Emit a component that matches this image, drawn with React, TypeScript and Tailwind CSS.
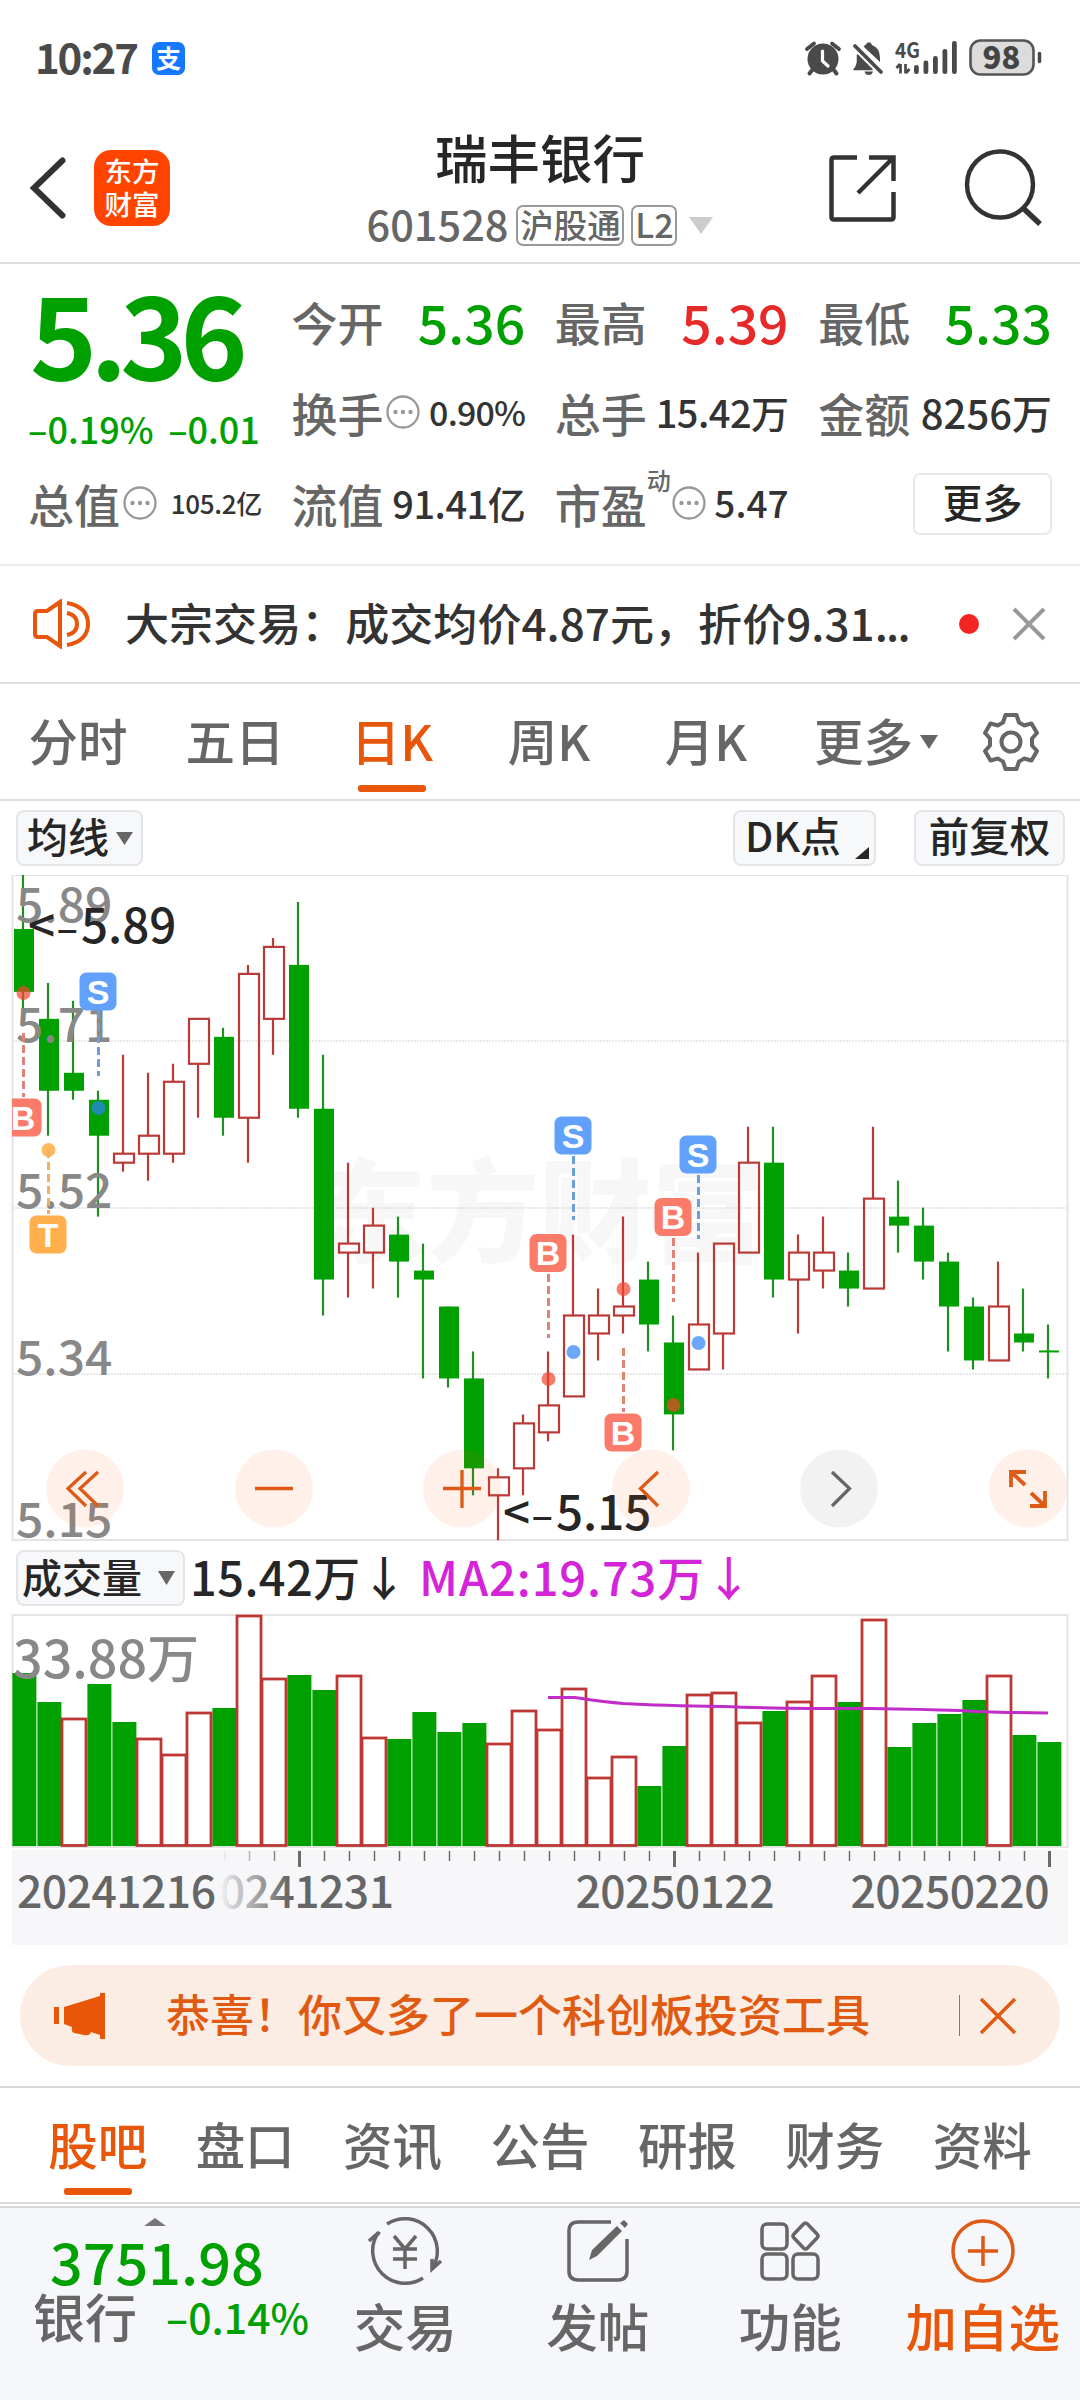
import React from "react";

const GREEN = "#00a000";
const RED = "#b93a36";
const ORANGE = "#e8560a";

/* [up, high, low, bodyTop, bodyBottom] in cents */
const candles: [number, number, number, number, number][] = [
  [0, 589, 574, 583, 576],
  [0, 577, 560, 573, 565],
  [0, 575, 564, 567, 565],
  [0, 565, 551, 564, 560],
  [1, 569, 556, 558, 557],
  [1, 567, 555, 560, 558],
  [1, 568, 557, 566, 558],
  [1, 573, 562, 573, 568],
  [0, 572, 560, 571, 562],
  [1, 579, 557, 578, 562],
  [1, 582, 569, 581, 573],
  [0, 586, 562, 579, 563],
  [0, 569, 540, 563, 544],
  [1, 557, 542, 548, 547],
  [1, 552, 543, 550, 547],
  [0, 551, 542, 549, 546],
  [0, 548, 533, 545, 544],
  [0, 541, 532, 541, 533],
  [0, 536, 520, 533, 523],
  [1, 523, 515, 522, 520],
  [1, 529, 520, 528, 523],
  [1, 536, 526, 530, 527],
  [1, 549, 531, 540, 531],
  [1, 543, 535, 540, 538],
  [1, 551, 538, 541, 540],
  [0, 546, 536, 544, 539],
  [0, 540, 525, 537, 529],
  [1, 547, 534, 539, 534],
  [1, 548, 534, 548, 538],
  [1, 561, 547, 557, 547],
  [0, 561, 542, 557, 544],
  [1, 549, 538, 547, 544],
  [1, 551, 543, 547, 545],
  [0, 547, 541, 545, 543],
  [1, 561, 543, 553, 543],
  [0, 555, 547, 551, 550],
  [0, 552, 544, 550, 546],
  [0, 547, 536, 546, 541],
  [0, 542, 534, 541, 535],
  [1, 546, 535, 541, 535],
  [0, 543, 536, 538, 537],
  [0, 539, 533, 536, 536],
];

/* bar tops, in chart pixels below the panel's upper edge */
const volumes = [
  58, 87, 104, 69, 107, 124, 140, 98, 93, 1, 64, 60, 75, 61, 123, 124, 97, 117, 108, 129, 96, 115, 74, 163, 142, 171,
  131, 80, 78, 108, 96, 87, 61, 87, 5, 132, 108, 99, 85, 61, 120, 127,
];

const py = (c: number) => (589 - c) * 8.99;

type Mark = { t: "B" | "S" | "T"; x: number; y: number; from: number; to: number; dot: number };
const marks: Mark[] = [
  { t: "B", x: 23, y: 242.5, from: 158, to: 222, dot: 118 },
  { t: "T", x: 48, y: 359.5, from: 275, to: 339, dot: 275 },
  { t: "S", x: 98, y: 116.5, from: 136, to: 201, dot: 233 },
  { t: "B", x: 548, y: 378, from: 399, to: 463, dot: 504 },
  { t: "S", x: 573, y: 260.5, from: 281, to: 345, dot: 477 },
  { t: "B", x: 623, y: 557.5, from: 473, to: 537, dot: 414 },
  { t: "B", x: 673, y: 342, from: 363, to: 427, dot: 530 },
  { t: "S", x: 698, y: 279.5, from: 300, to: 364, dot: 468 },
];
const markFill = { B: "#fb7b6b", S: "#62a1fb", T: "#ffb04d" };
const markLine = { B: "#dd8377", S: "#6a9fdc", T: "#edb15f" };
const markDot = { B: "#f2452c", S: "#2b82fa", T: "#ff9d1c" };

const CJK = "'Noto Sans CJK SC', sans-serif";

function PriceChart() {
  return (
    <svg width="1080" height="668" viewBox="0 0 1080 668" className="block" fontFamily={CJK} fontWeight="500">
      <clipPath id="panel">
        <rect x="12" y="0" width="1056" height="668" />
      </clipPath>
      <text x="314" y="379" fontSize="112" fontWeight="900" fill="#f7f7f7" textLength="450">东方财富</text>
      {[166, 333, 499].map((y) => (
        <line key={y} x1="12" x2="1067" y1={y} y2={y} stroke="#d2d2d2" strokeWidth="1.2" strokeDasharray="2 1" />
      ))}
      <rect x="12.5" y="0" width="1055" height="665" fill="none" stroke="#e4e4e4" strokeWidth="2" />
      {candles.map(([up, hi, lo, a, b], i) => {
        const cx = 23 + 25 * i;
        return up ? (
          <g key={i} stroke={RED} strokeWidth="2.2" fill="none">
            <path d={`M${cx} ${py(hi)}V${py(a)}M${cx} ${py(b)}V${py(lo)}`} />
            <rect x={cx - 9} y={py(a)} width="20" height={py(b) - py(a)} />
          </g>
        ) : (
          <g key={i}>
            <rect x={cx - 1.1} y={py(hi)} width="2.2" height={py(lo) - py(hi)} fill="#1f8f22" />
            <rect x={cx - 9} y={py(a) - (a === b ? 1 : 0)} width="20" height={Math.max(2, py(b) - py(a))} fill={GREEN} />
          </g>
        );
      })}
      <g clipPath="url(#panel)">
        {marks.map((m, i) => (
          <circle key={i} cx={m.x + 0.5} cy={m.dot} r="7" fill={markDot[m.t]} fillOpacity="0.7" />
        ))}
      </g>
      <g fontSize="48" fill="#888">
        <text x="16" y="47">5.89</text>
        <text x="16" y="167">5.71</text>
        <text x="16" y="333">5.52</text>
        <text x="16" y="500">5.34</text>
        <text x="16" y="662">5.15</text>
      </g>
      <g clipPath="url(#panel)">
        {marks.map((m, i) => (
          <g key={i}>
            <line x1={m.x + 0.5} x2={m.x + 0.5} y1={m.from} y2={m.to} stroke={markLine[m.t]} strokeWidth="3" strokeDasharray="8 4" />
            <rect x={m.x - 18.5} y={m.y - 19} width="37" height="38" rx="7" fill={markFill[m.t]} />
            <text
              x={m.x}
              y={m.y + 12}
              textAnchor="middle"
              fontSize="34"
              fontWeight="700"
              fontFamily="'Liberation Sans', sans-serif"
              fill="#fff"
            >
              {m.t}
            </text>
          </g>
        ))}
      </g>
      <g fontSize="47.500" fill="#262626">
        <text y="67.500">
          <tspan x="28">&lt;</tspan>
          <tspan x="56.500" fontSize="40">–</tspan>
          <tspan x="81">5.89</tspan>
        </text>
        <text y="654.500">
          <tspan x="503">&lt;</tspan>
          <tspan x="531.500" fontSize="40">–</tspan>
          <tspan x="556">5.15</tspan>
        </text>
      </g>
      {[85, 274, 462, 651, 1028].map((x) => (
        <circle key={x} cx={x} cy="613.500" r="39" fill="#ff5a00" fillOpacity="0.085" />
      ))}
      <circle cx="839" cy="613.500" r="39" fill="#000" fillOpacity="0.05" />
      <g fill="none" stroke="#dd5a17" strokeWidth="3.300">
        <path d="M86 597L68 613.500L86 631M98 597L80 613.500L98 631" />
        <path d="M255 613.500H293" />
        <path d="M443 613.500H481M462 595V633" />
        <path d="M658 597L640.500 613.500L658 631" />
        <path d="M1026 597H1011V612M1011 597L1025 610M1030 631H1045V616M1045 631L1031 618" strokeWidth="3.800" />
        <path d="M832 597L849.500 613.500L832 631" stroke="#666" />
      </g>
    </svg>
  );
}

function VolumeChart() {
  return (
    <svg width="1080" height="331" viewBox="0 0 1080 331" className="block" fontFamily={CJK} fontWeight="500">
      <defs>
        <linearGradient id="fade" x1="0" x2="1" y1="0" y2="0">
          <stop offset="0" stopColor="#f7f7fa" />
          <stop offset="0.2" stopColor="#f7f7fa" stopOpacity="0.75" />
          <stop offset="1" stopColor="#f7f7fa" stopOpacity="0" />
        </linearGradient>
      </defs>
      <rect x="12" y="236" width="1056" height="95" fill="#f7f7fa" />
      <rect x="12.500" y="1" width="1055" height="232" fill="none" stroke="#e4e4e4" strokeWidth="2" />
      {volumes.map((v, i) =>
        candles[i][0] && i !== 4 ? null : (
          <rect key={i} x={12.4 + 25 * i} y={v + 1} width="24" height={231 - v} fill={GREEN} />
        ),
      )}
      {volumes.map((v, i) =>
        (candles[i][0] && i !== 4) || i === 2 ? (
          <rect key={i} x={12 + 25 * i} y={v + 1} width="24" height={230.5 - v} fill="#fff" stroke="#bd3834" strokeWidth="2.800" />
        ) : null,
      )}
      <path
        d="M548 83.500H575C592 86 605 88 623 89.500C660 91.500 690 92 723 92.500C760 94 820 94.500 870 94.500C905 95 930 95.500 960 96.500C980 98 1000 98.500 1048 99"
        fill="none"
        stroke="#c02cc8"
        strokeWidth="3"
      />
      <text x="13" y="64" fontSize="52" fill="#888">33.88万</text>
      {volumes.map((_, i) => {
        const major = i === 11 || i === 26 || i === 41;
        if (i < 8) return null;
        return (
          <rect
            key={i}
            x={24.5 + 25 * i - (major ? 1.5 : 0.75)}
            y="237"
            width={major ? 3 : 1.5}
            height={major ? 16 : 10}
            fill="#6b6b6b"
          />
        );
      })}
      <g fontSize="44.500" fill="#666">
        <text x="195" y="294" textLength="199">20241231</text>
        <rect x="190" y="237" width="30" height="80" fill="#f7f7fa" />
        <rect x="219" y="237" width="70" height="80" fill="url(#fade)" />
        <text x="17" y="294" textLength="199">20241216</text>
        <text x="575.500" y="294" textLength="199">20250122</text>
        <text x="850.500" y="294" textLength="199">20250220</text>
      </g>
    </svg>
  );
}

function Dots() {
  return (
    <svg width="34" height="34" viewBox="0 0 34 34" className="ml-[3px] shrink-0">
      <circle cx="17" cy="17" r="15.500" fill="none" stroke="#999" strokeWidth="2.300" />
      <circle cx="9.500" cy="17" r="2.200" fill="#999" />
      <circle cx="17" cy="17" r="2.200" fill="#999" />
      <circle cx="24.500" cy="17" r="2.200" fill="#999" />
    </svg>
  );
}

function Cell({ label, sup, dots, value, cls }: { label: string; sup?: string; dots?: boolean; value: string; cls: string }) {
  return (
    <div className="flex h-[91px] items-center justify-between whitespace-nowrap">
      <div className="relative flex items-center text-[46px] leading-none font-medium text-[#666]">
        {label}
        {sup && <span className="-mt-[46px] -mr-0.5 text-[24px] leading-none">{sup}</span>}
        {dots && <Dots />}
      </div>
      <div className={cls}>{value}</div>
    </div>
  );
}

function StatusBar() {
  return (
    <div className="flex h-[116px] items-center justify-between pr-[39px] pl-[35px] text-[#4a4a4a]">
      <div className="flex items-center">
        <span className="w-[117px] pb-[4px] text-[42px] leading-none font-bold tracking-[-2.200px]">10:27</span>
        <span className="flex size-[33px] items-center justify-center rounded-[7px] bg-[#1677ff] pb-[2px] text-[25px] leading-none font-bold text-white">
          支
        </span>
      </div>
      <svg width="240" height="44" viewBox="803 36 240 44" className="-mr-[2px]" fontFamily={CJK}>
        <g fill="#4a4a4a">
          <circle cx="823" cy="59" r="15.500" />
          <path d="M813 69L809.500 73.500M833 69L836.500 73.500" stroke="#4a4a4a" strokeWidth="4" strokeLinecap="round" />
          <path d="M807 49L814 43.500M839 49L832 43.500" stroke="#4a4a4a" strokeWidth="3.800" fill="none" strokeLinecap="round" />
          <path d="M822.500 51V61L828 66" stroke="#fff" strokeWidth="3.200" fill="none" strokeLinecap="round" />
          <path d="M854 69.500Q857.500 66 857.500 61V55L872 69.500Z" stroke="#4a4a4a" strokeWidth="1.500" strokeLinejoin="round" />
          <path d="M863.500 46.500Q866 44.500 867.500 42.500H870.500L872 45Q880 48 880 58V62Z" />
          <path d="M855 46L881 72" stroke="#4a4a4a" strokeWidth="3.800" strokeLinecap="round" />
          <path d="M864.500 71.500H873Q872 75 868.700 75Q865.500 75 864.500 71.500Z" />
          <text x="895" y="57.500" fontSize="21" fontWeight="700" textLength="25" lengthAdjust="spacingAndGlyphs">4G</text>
          <path d="M900.500 64V73.500M896.500 68L900 64M905.500 64V73.500M906 73L909.500 69" stroke="#4a4a4a" strokeWidth="2.700" fill="none" />
          <rect x="914" y="65" width="4.800" height="9" rx="2.200" />
          <rect x="923.500" y="60.500" width="4.800" height="13.500" rx="2.200" />
          <rect x="933" y="56" width="4.800" height="18" rx="2.200" />
          <rect x="942.500" y="49" width="4.800" height="25" rx="2.200" />
          <rect x="952" y="41" width="4.800" height="33" rx="2.200" />
        </g>
        <rect x="970.500" y="40.500" width="63" height="34" rx="10" fill="#dcdcdc" stroke="#555" strokeWidth="2.600" />
        <path d="M1039.500 53.500V61.500" stroke="#4a4a4a" strokeWidth="3.500" strokeLinecap="round" />
        <text x="1001.500" y="68.500" fontSize="31" fontWeight="900" textAnchor="middle" fill="#444">98</text>
      </svg>
    </div>
  );
}

function Header() {
  return (
    <div className="flex h-[148px] justify-between border-b-2 border-[#dcdcdc]">
      <div className="flex w-[280px] gap-6 pt-[34px] pl-[28px]">
        <svg width="42" height="76" viewBox="28 150 42 76">
          <path d="M62.500 160.500L34 188L62.500 215.500" fill="none" stroke="#333" strokeWidth="6" strokeLinecap="round" />
        </svg>
        <div className="flex size-[76px] flex-col items-center justify-center rounded-[17px] bg-[#ff4400] pb-[3px] text-[27.500px] leading-[33px] font-medium text-white">
          <span>东方</span>
          <span>财富</span>
        </div>
      </div>
      <div className="flex flex-col items-center pt-[14px]">
        <div className="text-[52.500px] leading-[52px] font-medium text-[#262626]">瑞丰银行</div>
        <div className="mt-[22px] flex h-[42px] items-center text-[#666]">
          <span className="mr-[8px] pb-[3px] text-[41.500px] leading-none font-medium">601528</span>
          <span className="mr-[7px] flex h-[41px] w-[108px] items-center justify-center rounded-[7px] border-2 border-[#999] pb-[3px] text-[33.500px] leading-none font-medium">
            沪股通
          </span>
          <span className="mr-[12px] flex h-[41px] w-[46px] items-center justify-center rounded-[7px] border-2 border-[#999] pb-[3px] text-[34px] leading-none font-medium">
            L2
          </span>
          <svg width="24" height="17" viewBox="0 0 24 17">
            <path d="M0 0H24L12 17Z" fill="#ccc" />
          </svg>
        </div>
      </div>
      <svg width="280" height="100" viewBox="800 116 280 100" className="overflow-visible">
        <g fill="none" stroke="#333" strokeWidth="4.500">
          <path d="M857 157.500H834Q831.500 157.500 831.500 160V217Q831.500 219.500 834 219.500H891Q893.500 219.500 893.500 217V192" />
          <path d="M869 157.500H893.500V181M893 158L858 193" />
          <circle cx="1000" cy="184.500" r="33" />
          <path d="M1023 208L1040 224" strokeWidth="5.500" />
        </g>
      </svg>
    </div>
  );
}

function Quote() {
  return (
    <div className="h-[302px] border-b-2 border-[#ebebeb] pt-[11px] pr-[28px] pl-[28px]">
      <div className="grid grid-cols-4 gap-x-[29.500px] text-[#333]">
        <div className="row-span-2 flex flex-col text-[#00a000]">
          <div className="-mt-[5px] ml-[2px] text-[114px] leading-[122px] font-bold tracking-[-7px]">5.36</div>
          <div className="mt-[18px] flex justify-between pr-[2px] text-[36px] leading-[36px] font-medium">
            <span>–0.19%</span>
            <span>–0.01</span>
          </div>
        </div>
        <Cell label="今开" value="5.36" cls="text-[53.500px] leading-none font-medium text-[#00a000]" />
        <Cell label="最高" value="5.39" cls="text-[53.500px] leading-none font-medium text-[#e62a2a]" />
        <Cell label="最低" value="5.33" cls="text-[53.500px] leading-none font-medium text-[#00a000]" />
        <Cell label="换手" dots value="0.90%" cls="text-[34px] leading-none font-medium tracking-[-0.800px]" />
        <Cell label="总手" value="15.42万" cls="text-[38px] leading-none font-medium tracking-[-0.500px]" />
        <Cell label="金额" value="8256万" cls="text-[40px] leading-none font-medium" />
        <Cell label="总值" dots value="105.2亿" cls="text-[26px] leading-none font-medium tracking-[-0.300px]" />
        <Cell label="流值" value="91.41亿" cls="text-[38px] leading-none font-medium tracking-[-0.500px]" />
        <Cell label="市盈" sup="动" dots value="5.47" cls="text-[37px] leading-none font-medium" />
        <div className="flex h-[91px] items-center justify-end">
          <div className="mt-[2px] flex h-[62px] w-[139px] items-center justify-center rounded-[7px] border-2 border-[#e8e8e8] pb-[5px] text-[40px] leading-none font-medium text-[#262626]">
            更多
          </div>
        </div>
      </div>
    </div>
  );
}

function Notice() {
  return (
    <div className="flex h-[118px] items-center border-b-2 border-[#dcdcdc] pr-[34px] pl-[33px]">
      <svg width="58" height="50" viewBox="33 598 58 50" fill="none" stroke={ORANGE} strokeWidth="4">
        <path d="M60 601L47 610H38Q35 610 35 613V633Q35 636 38 636H47L60 645Z" />
        <path d="M67 612Q77 614 77 623Q77 632 67 634" />
        <path d="M67 602Q88 606 88 623Q88 640 67 644" />
      </svg>
      <div className="ml-[34px] flex pb-[4px] text-[44px] leading-none font-medium tracking-[0.050px] whitespace-nowrap text-[#333]">
        大宗交易：成交均价4.87元，折价9.31<span className="tracking-[-1.800px]">...</span>
      </div>
      <div className="ml-auto size-[20px] rounded-full bg-[#f42424]" />
      <svg width="34" height="34" viewBox="0 0 34 34" className="ml-[33px]">
        <path d="M2 2L32 32M32 2L2 32" stroke="#999" strokeWidth="4" />
      </svg>
    </div>
  );
}

function PeriodTabs() {
  return (
    <div className="flex h-[117px] items-center border-b-2 border-[#dcdcdc] text-[49.500px] leading-none font-medium text-[#666]">
      {["分时", "五日", "日K", "周K", "月K"].map((t) => (
        <div
          key={t}
          className={
            t === "日K"
              ? "relative -ml-[1px] flex w-[158px] justify-center pb-[3px] text-[#e8560a]"
              : "-ml-[1px] flex w-[158px] justify-center pb-[3px]"
          }
        >
          {t}
          {t === "日K" && <span className="absolute -bottom-[24px] h-[7px] w-[68px] rounded-[3px] bg-[#e8560a]" />}
        </div>
      ))}
      <div className="ml-[29px] flex w-[124px] items-center justify-between">
        <span className="pb-[3px]">更多</span>
        <svg width="18" height="14" viewBox="0 0 18 14">
          <path d="M0 0H18L9 14Z" fill="#666" />
        </svg>
      </div>
      <svg width="60" height="60" viewBox="-30 -30 60 60" className="ml-[43px]" fill="none" stroke="#666" strokeWidth="4">
        <path
          d="M-5.500 -27H5.500L8 -19.500Q11 -18 13 -16.500L20.500 -18.500L26 -9L21 -3.500V3.500L26 9L20.500 18.500L13 16.500Q11 18 8 19.500L5.500 27H-5.500L-8 19.500Q-11 18 -13 16.500L-20.500 18.500L-26 9L-21 3.500V-3.500L-26 -9L-20.500 -18.500L-13 -16.500Q-11 -18 -8 -19.500Z"
          strokeLinejoin="round"
        />
        <circle r="9.500" />
      </svg>
    </div>
  );
}

function ChartTools() {
  return (
    <div className="flex h-[74px] items-start pt-[9px] pr-[15px] pl-[16px] text-[41px] leading-none font-medium text-[#262626]">
      <div className="flex h-[56px] w-[127px] items-center justify-between rounded-[8px] border-2 border-[#e4e5e8] bg-[#f7f8fa] pr-[8px] pl-[9px]">
        <span className="pb-[5px]">均线</span>
        <svg width="17" height="13" viewBox="0 0 17 13">
          <path d="M0 0H17L8.500 13Z" fill="#666" />
        </svg>
      </div>
      <div className="ml-auto flex h-[56px] w-[143px] items-center justify-between rounded-[8px] border-2 border-[#e4e5e8] bg-[#f7f8fa] pr-[5px] pl-[10px] text-[40.500px]">
        <span className="pb-[5px]">DK点</span>
        <svg width="14" height="12" viewBox="0 0 14 12" className="mt-[30px]">
          <path d="M14 0V12H0Z" fill="#262626" />
        </svg>
      </div>
      <div className="ml-[38px] flex h-[56px] w-[151px] items-center justify-center rounded-[8px] border-2 border-[#e4e5e8] bg-[#f7f8fa] pb-[5px] text-[40.500px]">
        前复权
      </div>
    </div>
  );
}

function VolumeHead() {
  return (
    <div className="flex h-[71px] items-center pb-[1px] pl-[16px] text-[47px] leading-none font-medium">
      <div className="flex h-[56px] w-[169px] items-center justify-between rounded-[8px] border-2 border-[#e4e5e8] bg-[#f7f8fa] pr-[8px] pl-[4px] text-[40px] text-[#262626]">
        <span className="pb-[5px]">成交量</span>
        <svg width="17" height="14" viewBox="0 0 17 14">
          <path d="M0 0H17L8.500 14Z" fill="#666" />
        </svg>
      </div>
      <span className="ml-[5px] w-[229px] pb-[6px] tracking-[0.400px] whitespace-nowrap text-[#262626]">15.42万↓</span>
      <span className="pb-[6px] tracking-[0.900px] whitespace-nowrap text-[#d424d8]">MA2:19.73万↓</span>
    </div>
  );
}

function Banner() {
  return (
    <div className="mx-[20px] mt-[20px] mb-[20px] flex h-[101px] items-center rounded-full bg-[#fcede4] pr-[43px] pl-[34px]">
      <svg width="52" height="46" viewBox="0 0 52 46" fill={ORANGE}>
        <rect x="0" y="14" width="5" height="17" />
        <path d="M10 14L46 3V0H51V46H46V42L37 39Q36 43 30 42L20 40Q17 39 18 34L10 31Z" />
      </svg>
      <div className="ml-[60px] pb-[5px] text-[44px] leading-none font-medium whitespace-nowrap text-[#e05a12]">
        恭喜！你又多了一个科创板投资工具
      </div>
      <div className="ml-auto h-[41px] w-px bg-[#e05a12]" />
      <svg width="38" height="38" viewBox="0 0 38 38" className="ml-[19px]">
        <path d="M2 2L36 36M36 2L2 36" stroke="#e05a12" strokeWidth="3.500" />
      </svg>
    </div>
  );
}

function InfoTabs() {
  return (
    <div className="grid h-[118px] grid-cols-7 items-center border-y-2 border-[#dadada] px-6 text-[49.500px] leading-none font-medium text-[#666]">
      {["股吧", "盘口", "资讯", "公告", "研报", "财务", "资料"].map((t, i) => (
        <div key={t} className={i === 0 ? "relative flex justify-center pb-[2px] text-[#e8560a]" : "flex justify-center pb-[2px]"}>
          {t}
          {i === 0 && <span className="absolute -bottom-[24px] h-[7px] w-[68px] rounded-[3px] bg-[#e8560a]" />}
        </div>
      ))}
    </div>
  );
}

function NavItem({ label, children, active }: { label: string; children: React.ReactNode; active?: boolean }) {
  return (
    <div
      className={
        active
          ? "flex w-[192.500px] flex-col items-center text-[#e8560a]"
          : "flex w-[192.500px] flex-col items-center text-[#666]"
      }
    >
      <svg
        width="76"
        height="70"
        viewBox="-38 -35 76 70"
        className="mt-[8px]"
        fill="none"
        stroke={active ? "#dd5a17" : "#666"}
        strokeWidth="3.500"
      >
        {children}
      </svg>
      <span className="mt-[13px] text-[51.500px] leading-[52px] font-medium whitespace-nowrap">{label}</span>
    </div>
  );
}

function BottomNav() {
  return (
    <div className="mt-[2px] flex h-[194px] border-t-2 border-[#d5d6d9] bg-[#f6f7fa]">
      <div className="flex w-[309px] flex-col pl-[33px] font-medium">
        <svg width="22" height="8" viewBox="0 0 22 8" className="mt-[10px] ml-[111px]">
          <path d="M0 8H22L11 0Z" fill="#777" />
        </svg>
        <div className="mt-[5px] ml-[17px] text-[57.500px] leading-[58px] text-[#00a000]">3751.98</div>
        <div className="mt-[1px] flex items-center justify-between text-[52px] leading-[52px] text-[#666]">
          银行
          <span className="text-[41px] whitespace-nowrap text-[#00a000]">–0.14%</span>
        </div>
      </div>
      <NavItem label="交易">
        <path d="M-18 -27A32.500 32.500 0 0 1 27 18M18 27A32.500 32.500 0 0 1 -27 -18" />
        <path d="M-36 -10L-27 -18L-25 -17M36 10L27 18L27 8" />
        <path d="M-11 -15L0 -2L11 -15M0 -2V18M-12 -2H12M-12 8H12" />
      </NavItem>
      <NavItem label="发帖">
        <path d="M13 -29H-20Q-29 -29 -29 -20V20Q-29 29 -20 29H20Q29 29 29 20V-12" />
        <path d="M-9 9L-6 -1L19 -25L24 -20L-1 5Z M22 -28L26 -31L30 -27L27 -23Z" fill="#666" stroke="none" />
      </NavItem>
      <NavItem label="功能">
        <rect x="-28" y="-27" width="25" height="25" rx="5" />
        <rect x="-28" y="3" width="25" height="25" rx="5" />
        <rect x="3" y="3" width="25" height="25" rx="5" />
        <path d="M13.500 -27Q15.500 -29 17.500 -27L27 -17Q29 -15 27 -13L17.500 -3Q15.500 -1 13.500 -3L4 -13Q2 -15 4 -17Z" />
      </NavItem>
      <NavItem label="加自选" active>
        <circle r="30" />
        <path d="M-15 0H15M0 -15V15" />
      </NavItem>
    </div>
  );
}

export default function App() {
  return (
    <div className="h-[2400px] w-[1080px] overflow-hidden bg-white font-['Noto_Sans_CJK_SC',sans-serif]">
      <StatusBar />
      <Header />
      <Quote />
      <Notice />
      <PeriodTabs />
      <ChartTools />
      <PriceChart />
      <VolumeHead />
      <VolumeChart />
      <Banner />
      <InfoTabs />
      <BottomNav />
    </div>
  );
}
